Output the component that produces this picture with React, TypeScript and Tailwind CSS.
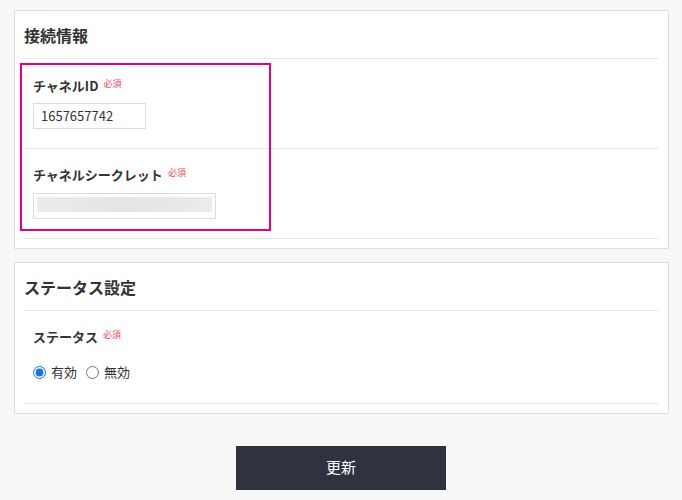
import React from 'react';

const Required: React.FC = () => (
  <span className="ml-[5px] relative -top-[3px] text-[9px] leading-none font-normal text-[#f0485b]">必須</span>
);

const Label: React.FC<{ text: string }> = ({ text }) => (
  <div className="flex items-center h-5 text-[13px] font-bold text-[#333]">
    {text}
    <Required />
  </div>
);

const CardTitle: React.FC<{ text: string }> = ({ text }) => (
  <div className="pt-[12px] pb-[11px] border-b border-[#e8e8e8]">
    <h2 className="text-[16px] leading-6 font-bold text-[#333]">{text}</h2>
  </div>
);

export default function App() {
  return (
    <div
      className="min-h-[500px] bg-[#f8f8f8] pl-[14px] pr-[13px] pt-[10px] pb-[10px]"
      style={{ fontFamily: '"Noto Sans CJK JP", "Noto Sans", sans-serif' }}
    >
      {/* 接続情報 */}
      <div className="relative bg-white border border-[#dedede] px-[9px] pb-[9px]">
        <CardTitle text="接続情報" />

        <div className="pl-[9px] pt-[17px] pb-[19px] border-b border-[#e8e8e8]">
          <Label text="チャネルID" />
          <div className="mt-[7px] w-[113px] h-[26px] border border-[#dcdcdc] flex items-center pl-[7px] text-[13px] text-[#333]">
            1657657742
          </div>
        </div>

        <div className="pl-[9px] pt-[16px] pb-[19px] border-b border-[#e8e8e8]">
          <Label text="チャネルシークレット" />
          <div className="mt-[8px] w-[183px] h-[26px] border border-[#dcdcdc] p-[3px] pb-[6px]">
            <div className="h-full bg-[linear-gradient(90deg,#ececec_0%,#e9e9e9_20%,#e4e4e4_45%,#e6e6e6_70%,#ececec_100%)]" />
          </div>
        </div>

        {/* highlight frame */}
        <div className="absolute left-[5px] top-[52px] w-[251px] h-[168px] border-2 border-[#e4007f] pointer-events-none" />
      </div>

      {/* ステータス設定 */}
      <div className="mt-[13px] bg-white border border-[#dedede] px-[9px] pb-[9px]">
        <CardTitle text="ステータス設定" />
        <div className="pl-[9px] pt-[16px] pb-[21px] border-b border-[#e8e8e8]">
          <Label text="ステータス" />
          <div className="mt-[15px] flex items-center h-5 text-[13px] text-[#333]">
            <label className="flex items-center">
              <input type="radio" name="status" defaultChecked className="m-0 w-[13px] h-[13px] accent-[#1a73e8]" />
              <span className="ml-[5px]">有効</span>
            </label>
            <label className="flex items-center ml-[9px]">
              <input type="radio" name="status" className="m-0 w-[13px] h-[13px]" />
              <span className="ml-[5px]">無効</span>
            </label>
          </div>
        </div>
      </div>

      <div className="flex justify-center mt-[32px] pr-px">
        <button className="w-[210px] h-[44px] bg-[#2f3340] text-white text-[15px] leading-none pb-[3px]">更新</button>
      </div>
    </div>
  );
}
